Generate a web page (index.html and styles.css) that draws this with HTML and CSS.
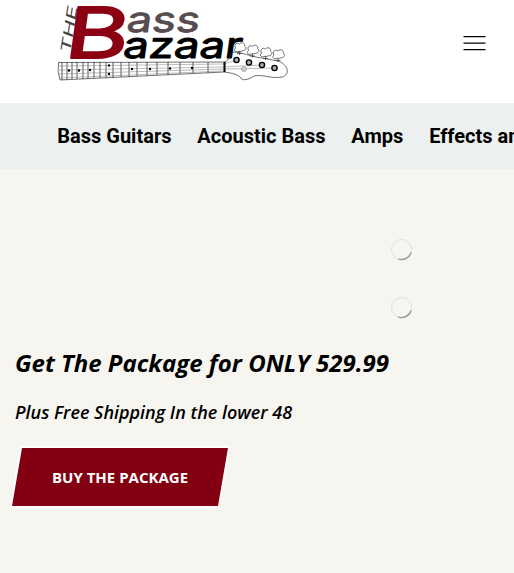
FILE: index.html
```
<!DOCTYPE html>
<html lang="en">
<head>
<meta charset="utf-8">
<title>The Bass Bazaar</title>
<link rel="stylesheet" href="styles.css">
</head>
<body>
<header class="header">
  <a class="logo" href="#">
    <svg width="234" height="84" viewBox="56 0 234 84" role="img">
      <text class="logo-the" transform="translate(70 54) rotate(-81) skewX(-12)" textLength="47" lengthAdjust="spacingAndGlyphs">THE</text>
      <text class="logo-b" transform="translate(63 57.500) skewX(-8)" textLength="63" lengthAdjust="spacingAndGlyphs">B</text>
      <text class="logo-ass" transform="translate(125.500 31.500) skewX(-8)" textLength="73" lengthAdjust="spacingAndGlyphs">ass</text>
      <text class="logo-azaar" transform="translate(122 57.500) skewX(-8)" textLength="119" lengthAdjust="spacingAndGlyphs">azaar</text>
      <g class="line">
        <path d="M58.500 62.500L224 62C231 61 229 53 233 52C242 52 251 57 262 58L278 61C289 65 290 75 282 77C270 79 263 74 254 76C248 80 243 81 241 78C237 74 232 73 224 72L60 80Q57 72 58.500 62.500Z"/>
        <path class="fret" d="M62 62v18M67 62v18M72 62v17M77 62v17M83 62v17M88 62v17M94 62v16M100 62v16M106 62v16M113 62v16M121 62v15M129 62v15M137 62v14M147 62v14M157 62v13M168 62v13M180 62v12M193 62v11M208 62v11"/>
        <path class="string" d="M59 66L224 64L237 60M59 70L224 67L262 65M59 74L224 69L275 68M59 78L224 71"/>
        <path class="nut" d="M224.500 62v10"/>
      </g>
      <g class="dots">
        <circle cx="69" cy="70.500" r="1.200"/><circle cx="79" cy="70.500" r="1.200"/><circle cx="90" cy="70" r="1.200"/>
        <circle cx="109" cy="65.500" r="1.200"/><circle cx="109" cy="74" r="1.200"/><circle cx="132" cy="69" r="1.200"/>
        <circle cx="150" cy="69" r="1.200"/><circle cx="170" cy="68.500" r="1.200"/><circle cx="192" cy="68" r="1.200"/>
      </g>
      <g class="peg">
        <path id="peg" d="M239.500 55v-4c-3 2-7 0-4-3c-2-4 2-6 4-4c3-3 6 0 5 2c3 2 1 5-3 5l-2 1M237 53.500h5"/>
        <use href="#peg" x="13" y="2.500"/><use href="#peg" x="26" y="5"/><use href="#peg" x="38.500" y="7"/>
      </g>
      <g class="tuner"><circle cx="236.500" cy="60" r="2.600"/><circle cx="249" cy="62.500" r="2.600"/><circle cx="262" cy="65" r="2.600"/><circle cx="274.500" cy="68" r="2.600"/></g>
      <circle class="tree" cx="244" cy="69" r="2.500"/>
    </svg>
  </a>
  <button class="menu" aria-label="Menu">
    <svg width="23" height="16" viewBox="0 0 23 16"><path d="M.5 1.700h22M.5 8.200h22M.5 14.700h22"/></svg>
  </button>
</header>
<nav class="nav">
  <a href="#">Bass Guitars</a><a href="#">Acoustic Bass</a><a href="#">Amps</a><a href="#">Effects and Pedals</a>
</nav>
<main class="hero">
  <div class="loaders">
    <svg class="spinner" width="22" height="22" viewBox="0 0 22 22"><circle cx="10.500" cy="10.500" r="10"/><path d="M7.500 20.100A10 10 0 0 0 20.100 13.500"/></svg>
    <svg class="spinner" width="22" height="22" viewBox="0 0 22 22"><circle cx="10.500" cy="10.500" r="10"/><path d="M7.500 20.100A10 10 0 0 0 20.100 13.500"/></svg>
  </div>
  <h1>Get The Package for ONLY 529.99</h1>
  <h2>Plus Free Shipping In the lower 48</h2>
  <a class="buy" href="#">
    <svg class="buy-shape" width="230" height="66" viewBox="0 0 230 66"><path class="edge" d="M11 1H221L210 62.500H1Z"/><path d="M13 3H219L209 61H3Z"/></svg>
    <span>BUY THE PACKAGE</span>
  </a>
</main>
</body>
</html>
```
FILE: styles.css
```
* { box-sizing: border-box; }
body { margin: 0; overflow: hidden; height: 573px; background: #f6f5f0; color: #000; font-family: "Open Sans", sans-serif; }
a { color: inherit; text-decoration: none; }
svg { display: block; }
.header { display: flex; justify-content: space-between; height: 103px; padding: 0 28px 0 56px; background: #fff; }
.menu { align-self: flex-start; margin-top: 35px; padding: 0; border: 0; background: none; }
.menu path { stroke: #000; stroke-width: 1.3; }
.logo text { font-family: Inter, sans-serif; font-weight: 400; stroke-linejoin: round; }
.logo .logo-the { font-size: 14px; fill: #444; }
.logo .logo-b { font-size: 70px; fill: #8b0012; stroke: #8b0012; stroke-width: 2; }
.logo .logo-ass { font-size: 35px; fill: #564b4e; stroke: #564b4e; stroke-width: .8; }
.logo .logo-azaar { font-size: 36px; fill: #000; stroke: #000; stroke-width: 1; }
.line, .peg { fill: none; stroke: #333; stroke-width: .7; }
.fret { stroke-width: .8; }
.string { stroke: #777; stroke-width: .5; }
.nut { stroke: #000; stroke-width: 2; }
.tuner { fill: #aaa; stroke: #000; stroke-width: 1.4; }
.tree { fill: #ccc; stroke: #999; stroke-width: .7; }
.nav { display: flex; align-items: center; gap: 26px; height: 66px; padding-left: 57.3px; background: #ecf0ef; font: bold 20px/30px Roboto, sans-serif; white-space: nowrap; overflow: hidden; }
.nav a { flex: none; }
.nav a + a { margin-left: -.15px; }
.hero { padding: 70px 12px 0; }
.loaders { display: flex; flex-direction: column; gap: 36px; width: 22px; margin-left: 379px; }
.spinner { fill: none; stroke: #dfdfdc; stroke-width: 1; }
.spinner path { stroke: #999; stroke-width: 1.4; }
h1, h2 { margin: 0 0 0 3px; font-style: italic; white-space: nowrap; }
h1 { margin-top: 26px; font-size: 24px; line-height: 36px; font-weight: 700; }
h2 { margin-top: 18px; font-size: 18px; line-height: 26px; font-weight: 600; }
.buy { display: grid; align-items: center; width: 230px; height: 66px; margin: 20px 0 0 -3px; color: #fff; font-size: 15px; font-weight: 700; }
.buy > * { grid-area: 1 / 1; }
.buy span { padding: 0 0 3px 43px; }
.buy path { fill: #820011; }
.buy .edge { fill: #fff; }
```
